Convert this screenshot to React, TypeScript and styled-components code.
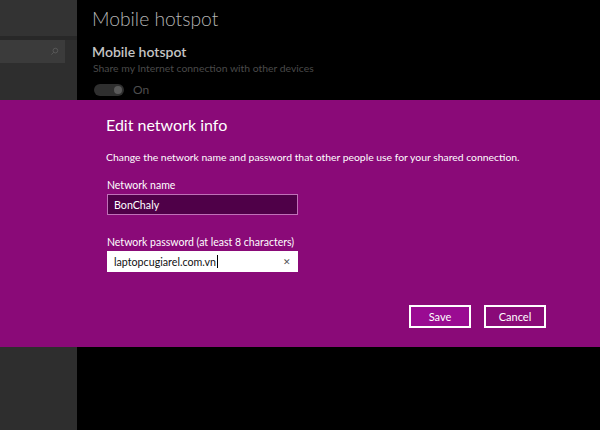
import React from "react";
import styled, { createGlobalStyle } from "styled-components";

const GlobalStyle = createGlobalStyle`
    html, body {
        margin: 0;
        padding: 0;
        background: #000;
    }
    body {
        font-family: Lato, "Open Sans", "Liberation Sans", sans-serif;
    }
`;

const App: React.FC = () => {
    return (
        <>
            <GlobalStyle />
            <Screen>
                <Sidebar>
                    <SidebarTop />
                    <SearchBox>
                        <SearchIcon viewBox="0 0 10 10">
                            <circle cx="6" cy="4" r="2.6" fill="none" stroke="#5a5a5a" strokeWidth="1" />
                            <line x1="4.2" y1="5.8" x2="1.5" y2="8.5" stroke="#5a5a5a" strokeWidth="1" />
                        </SearchIcon>
                    </SearchBox>
                </Sidebar>
                <Content>
                    <PageTitle>Mobile hotspot</PageTitle>
                    <SectionTitle>Mobile hotspot</SectionTitle>
                    <SectionDesc>Share my Internet connection with other devices</SectionDesc>
                    <ToggleRow>
                        <Toggle>
                            <Knob />
                        </Toggle>
                        <ToggleLabel>On</ToggleLabel>
                    </ToggleRow>
                </Content>

                <Dialog>
                    <DialogTitle>Edit network info</DialogTitle>
                    <DialogText>Change the network name and password that other people use for your shared connection.</DialogText>

                    <Field>
                        <FieldLabel>Network name</FieldLabel>
                        <TextBox dark>
                            <span>BonChaly</span>
                        </TextBox>
                    </Field>

                    <Field>
                        <FieldLabel>Network password (at least 8 characters)</FieldLabel>
                        <TextBox>
                            <span>laptopcugiarel.com.vn<Caret /></span>
                            <ClearMark>✕</ClearMark>
                        </TextBox>
                    </Field>

                    <Buttons>
                        <DialogButton primary>Save</DialogButton>
                        <DialogButton>Cancel</DialogButton>
                    </Buttons>
                </Dialog>
            </Screen>
        </>
    );
};

const Screen = styled.div`
    position: relative;
    width: 600px;
    height: 430px;
    display: flex;
    overflow: hidden;
    background: #000;
`;

const Sidebar = styled.div`
    width: 77px;
    height: 100%;
    background: #2e2e2e;
    display: flex;
    flex-direction: column;
`;

const SidebarTop = styled.div`
    height: 36px;
    background: #333;
    border-bottom: 4px solid #282828;
`;

const SearchBox = styled.div`
    width: 65px;
    height: 23px;
    background: #3b3b3b;
    display: flex;
    align-items: center;
    justify-content: flex-end;
    padding-right: 6px;
    box-sizing: border-box;
`;

const SearchIcon = styled.svg`
    width: 9px;
    height: 9px;
`;

const Content = styled.div`
    flex: 1;
    padding: 5px 0 0 15px;
    display: flex;
    flex-direction: column;
`;

const PageTitle = styled.div`
    font-size: 19.3px;
    font-weight: 300;
    color: #b4b4b4;
    line-height: 28px;
`;

const SectionTitle = styled.div`
    margin-top: 10px;
    font-size: 14px;
    font-weight: 600;
    color: #c4c4c4;
    line-height: 18px;
`;

const SectionDesc = styled.div`
    font-size: 10.4px;
    color: #4a4a4a;
    line-height: 14px;
    padding-left: 1px;
`;

const ToggleRow = styled.div`
    margin-top: 7px;
    display: flex;
    align-items: center;
    gap: 9px;
    padding-left: 2px;
`;

const Toggle = styled.div`
    width: 30px;
    height: 12px;
    border-radius: 6px;
    background: #2f2f2f;
    display: flex;
    align-items: center;
    justify-content: flex-end;
    padding-right: 2px;
    box-sizing: border-box;
`;

const Knob = styled.div`
    width: 8px;
    height: 8px;
    border-radius: 50%;
    background: #5a5a5a;
`;

const ToggleLabel = styled.span`
    font-size: 12px;
    color: #4e4e4e;
`;

const Dialog = styled.div`
    position: absolute;
    left: 0;
    top: 100px;
    width: 100%;
    height: 247px;
    background: #8a0a78;
    box-sizing: border-box;
    padding: 12px 54px 0 106px;
    display: flex;
    flex-direction: column;
    color: #fff;
`;

const DialogTitle = styled.div`
    font-size: 16px;
    line-height: 26px;
`;

const DialogText = styled.div`
    margin-top: 12px;
    font-size: 10.4px;
    line-height: 14px;
`;

const Field = styled.div`
    margin-top: 14px;
    display: flex;
    flex-direction: column;
    & + & {
        margin-top: 20px;
    }
`;

const FieldLabel = styled.div`
    font-size: 10.5px;
    line-height: 14px;
    margin-bottom: 2px;
    padding-left: 1px;
`;

const TextBox = styled.div<{ dark?: boolean }>`
    width: 191px;
    height: 21px;
    box-sizing: border-box;
    margin-left: 1px;
    padding: 0 6px;
    display: flex;
    align-items: center;
    justify-content: space-between;
    font-size: 10.7px;
    background: ${(p) => (p.dark ? "#4f0048" : "#fff")};
    border: 1px solid ${(p) => (p.dark ? "#c070b8" : "#fff")};
    color: ${(p) => (p.dark ? "#fff" : "#111")};
`;

const Caret = styled.span`
    display: inline-block;
    width: 1px;
    height: 13px;
    background: #000;
    vertical-align: -2px;
    margin-left: 1px;
`;

const ClearMark = styled.span`
    font-size: 9px;
    color: #555;
`;

const Buttons = styled.div`
    margin-top: 33px;
    display: flex;
    justify-content: flex-end;
    gap: 13px;
`;

const DialogButton = styled.button<{ primary?: boolean }>`
    width: 62px;
    height: 23px;
    box-sizing: border-box;
    border: 2px solid #fff;
    background: ${(p) => (p.primary ? "#9a0b92" : "#8a0a78")};
    color: #fff;
    font-family: inherit;
    font-size: 11px;
    padding: 0;
`;

export default App;
